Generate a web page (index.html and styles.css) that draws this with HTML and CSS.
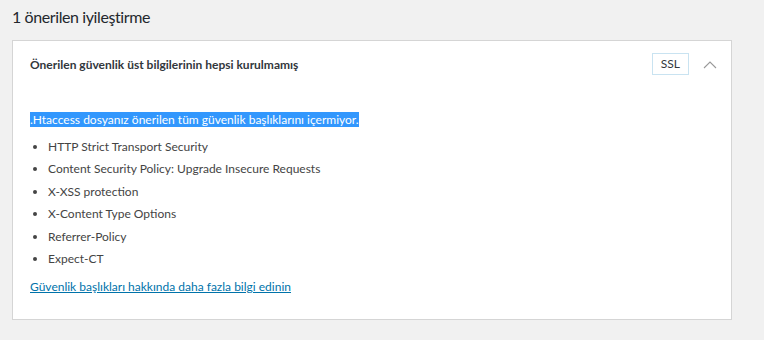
FILE: index.html
```html
<!DOCTYPE html>
<html lang="tr">
<head>
  <meta charset="UTF-8" />
  <title>Site Sağlığı</title>
  <link rel="stylesheet" href="styles.css">
</head>
<body>
  <div class="wrap">
    <h2 class="issues-title">1 önerilen iyileştirme</h2>

    <div class="accordion">
      <div class="accordion-head">
        <span class="accordion-title">Önerilen güvenlik üst bilgilerinin hepsi kurulmamış</span>
        <span class="badge">SSL</span>
        <svg class="chevron" width="14" height="9" viewBox="0 0 14 9">
          <polyline points="1,8 7,2 13,8" fill="none" stroke="#999" stroke-width="1.1"/>
        </svg>
      </div>

      <div class="accordion-body">
        <p class="lead"><span class="selected">.Htaccess dosyanız önerilen tüm güvenlik başlıklarını içermiyor.</span></p>
        <ul>
          <li>HTTP Strict Transport Security</li>
          <li>Content Security Policy: Upgrade Insecure Requests</li>
          <li>X-XSS protection</li>
          <li>X-Content Type Options</li>
          <li>Referrer-Policy</li>
          <li>Expect-CT</li>
        </ul>
        <a href="#">Güvenlik başlıkları hakkında daha fazla bilgi edinin</a>
      </div>
    </div>
  </div>
</body>
</html>
```

FILE: styles.css
```css
body {
  margin: 0;
  font-family: Lato, "Open Sans", sans-serif;
  background-color: #f1f1f1;
  color: #444;
}

.wrap {
  padding: 6px 32px 0 12px;
}

.issues-title {
  margin: 0 0 12px;
  font-size: 16px;
  font-weight: 400;
  line-height: 22px;
  letter-spacing: -0.4px;
  color: #23282d;
}

.accordion {
  background-color: white;
  border: 1px solid #d5d5d5;
}

.accordion-head {
  display: flex;
  align-items: center;
  padding: 11px 14px 0 17px;
  height: 24px;
}

.accordion-title {
  flex: 1;
  font-size: 12px;
  font-weight: 700;
  color: #32373c;
}

.badge {
  font-size: 12px;
  padding: 2px 8px;
  line-height: 16px;
  border: 1px solid #c9e3f1;
  margin-right: 14px;
  color: #32373c;
}

.chevron {
  display: block;
}

.accordion-body {
  padding: 35px 17px 23px;
  font-size: 12px;
}

.lead {
  margin: 0 0 9px;
  line-height: 18px;
}

.selected {
  background-color: #3297fd;
  color: white;
}

ul {
  margin: 0 0 10px;
  padding-left: 18px;
}

li {
  line-height: 18px;
  margin-bottom: 4.4px;
}

a {
  color: #0073aa;
  line-height: 18px;
}
```
